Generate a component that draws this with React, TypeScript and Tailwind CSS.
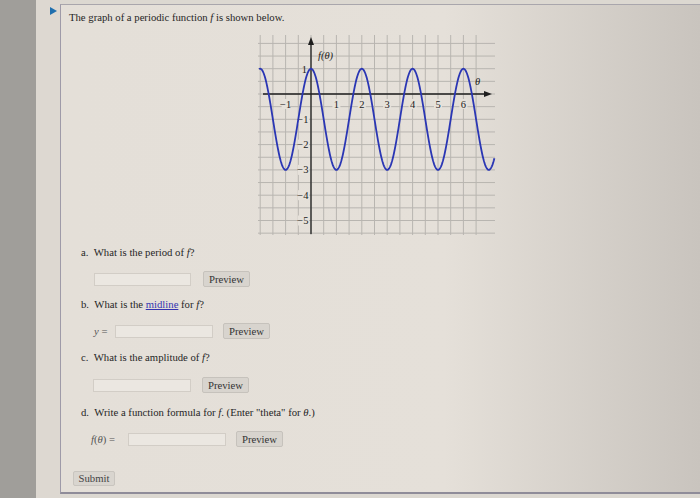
import React from "react";

const serif = { fontFamily: '"Liberation Serif", "Times New Roman", serif' };

// graph geometry in page pixels
const OX = 311;
const OY = 94;
const UX = 25.4;
const UY = 25.3;
const px = (t: number) => OX + t * UX;
const py = (v: number) => OY - v * UY;

function curvePath() {
  const pts: string[] = [];
  for (let t = -2.04; t <= 7.22; t += 0.02) {
    const v = 2 * Math.cos(Math.PI * t) - 1;
    pts.push(`${px(t).toFixed(2)},${py(v).toFixed(2)}`);
  }
  return "M" + pts.join(" L");
}

function Graph() {
  const vLines: number[] = [];
  for (let k = -4; k <= 13; k++) vLines.push(px(k / 2));
  const hLines: number[] = [];
  for (let k = 4; k >= -11; k--) hLines.push(py(k / 2));
  const xLabels = [
    { t: -1, s: "−1" },
    { t: 1, s: "1" },
    { t: 2, s: "2" },
    { t: 3, s: "3" },
    { t: 4, s: "4" },
    { t: 5, s: "5" },
    { t: 6, s: "6" },
  ];
  const yLabels = [
    { v: -1, s: "−1" },
    { v: -2, s: "−2" },
    { v: -3, s: "−3" },
    { v: -4, s: "−4" },
    { v: -5, s: "−5" },
  ];
  return (
    <svg
      width={245}
      height={210}
      viewBox="255 30 245 210"
      className="block"
      style={serif}
    >
      {vLines.map((x) => (
        <line key={"v" + x} x1={x} y1={35} x2={x} y2={235} stroke="#b8b5b0" strokeWidth={1} />
      ))}
      {hLines.map((y) => (
        <line key={"h" + y} x1={258} y1={y} x2={495} y2={y} stroke="#b8b5b0" strokeWidth={1} />
      ))}
      {/* axes */}
      <line x1={263} y1={OY} x2={486} y2={OY} stroke="#1e1e1e" strokeWidth={1.3} />
      <polygon points={`492,${OY} 484,${OY - 3} 484,${OY + 3}`} fill="#1e1e1e" />
      <line x1={OX} y1={234} x2={OX} y2={43} stroke="#1e1e1e" strokeWidth={1.3} />
      <polygon points={`${OX},37 ${OX - 3},45 ${OX + 3},45`} fill="#1e1e1e" />
      {/* labels */}
      {xLabels.map((l) => (
        <g key={"x" + l.t}>
          <rect x={px(l.t) - 4} y={99} width={8} height={10} fill="#e6e1da" />
          <text x={px(l.t)} y={107.5} fontSize={10.5} textAnchor="middle" fill="#222">
            {l.s}
          </text>
        </g>
      ))}
      {yLabels.map((l) => (
        <g key={"y" + l.v}>
          <rect x={298} y={py(l.v) - 5} width={11} height={10} fill="#e6e1da" />
          <text x={308.5} y={py(l.v) + 3.5} fontSize={10.5} textAnchor="end" fill="#222">
            {l.s}
          </text>
        </g>
      ))}
      <text x={307} y={73} fontSize={10.5} textAnchor="end" fill="#222">
        1
      </text>
      <text x={318} y={58.5} fontSize={10.5} fontStyle="italic" fill="#222">
        f(θ)
      </text>
      <text x={475} y={85} fontSize={10.5} fontStyle="italic" fill="#222">
        θ
      </text>
      <path d={curvePath()} fill="none" stroke="#2a36b4" strokeWidth={1.8} />
    </svg>
  );
}

function Field({ w }: { w: number }) {
  return (
    <div
      className="h-[13px] border border-[#d2cdc6] bg-[#ebe7e1]"
      style={{ width: w }}
    />
  );
}

function Preview() {
  return (
    <button className="h-[16px] w-[47px] rounded-[2px] border border-[#c6c2bc] bg-[#d8d4ce] text-[10.7px] leading-none text-[#333]">
      Preview
    </button>
  );
}

export default function App() {
  return (
    <div
      className="flex h-[498px] w-[700px] items-start overflow-hidden bg-[#dcd8d1] text-[10.7px] leading-[12px] text-[#262626]"
      style={serif}
    >
      <div className="h-[498px] w-[36px] shrink-0 bg-[#a09e9a]" />
      <div className="h-[498px] w-[24px] shrink-0 bg-[#ddd8d1] pt-[7px] pl-[14px]">
        <div className="h-0 w-0 border-y-[4px] border-l-[7px] border-y-transparent border-l-[#1f6fae]" />
      </div>
      <div className="mt-[4px] flex h-[490px] flex-1 flex-col border-t border-b-2 border-l border-t-[#a9a6ac] border-b-[#8f8c99] border-l-[#9e9aa8] bg-linear-to-r from-[#e4dfd8] via-[#e5e0d9] via-60% to-[#c9c4be] pl-[8px]">
        <p className="mt-[6px]">
          The graph of a periodic function <i>f</i> is shown below.
        </p>
        <div className="mt-[7px] ml-[186px]">
          <Graph />
        </div>

        <div className="pl-[12px]">
          <p className="mt-[6px]">
            a.&nbsp;&nbsp;What is the period of <i>f</i>?
          </p>
          <div className="mt-[13px] ml-[13px] flex items-center gap-[12px]">
            <Field w={97} />
            <Preview />
          </div>

          <p className="mt-[11px]">
            b.&nbsp;&nbsp;What is the{" "}
            <span className="text-[#3434b0] underline">midline</span> for <i>f</i>?
          </p>
          <div className="mt-[13px] ml-[13px] flex items-center">
            <span className="w-[21px] text-[#555]">
              <i>y</i> =
            </span>
            <Field w={98} />
            <div className="ml-[10px]">
              <Preview />
            </div>
          </div>

          <p className="mt-[12px]">
            c.&nbsp;&nbsp;What is the amplitude of <i>f</i>?
          </p>
          <div className="mt-[14px] ml-[12px] flex items-center gap-[11px]">
            <Field w={98} />
            <Preview />
          </div>

          <p className="mt-[13px]">
            d.&nbsp;&nbsp;Write a function formula for <i>f</i>. (Enter "theta" for <i>θ</i>.)
          </p>
          <div className="mt-[13px] ml-[10px] flex items-center">
            <span className="w-[37px] text-[#555]">
              <i>f</i>(<i>θ</i>) =
            </span>
            <Field w={98} />
            <div className="ml-[10px]">
              <Preview />
            </div>
          </div>
        </div>

        <div className="mt-[24px] ml-[4px]">
          <button className="h-[15px] w-[42px] rounded-[2px] border border-[#c9c5bf] bg-[#d9d5cf] text-[10.7px] leading-none text-[#444]">
            Submit
          </button>
        </div>
      </div>
    </div>
  );
}
